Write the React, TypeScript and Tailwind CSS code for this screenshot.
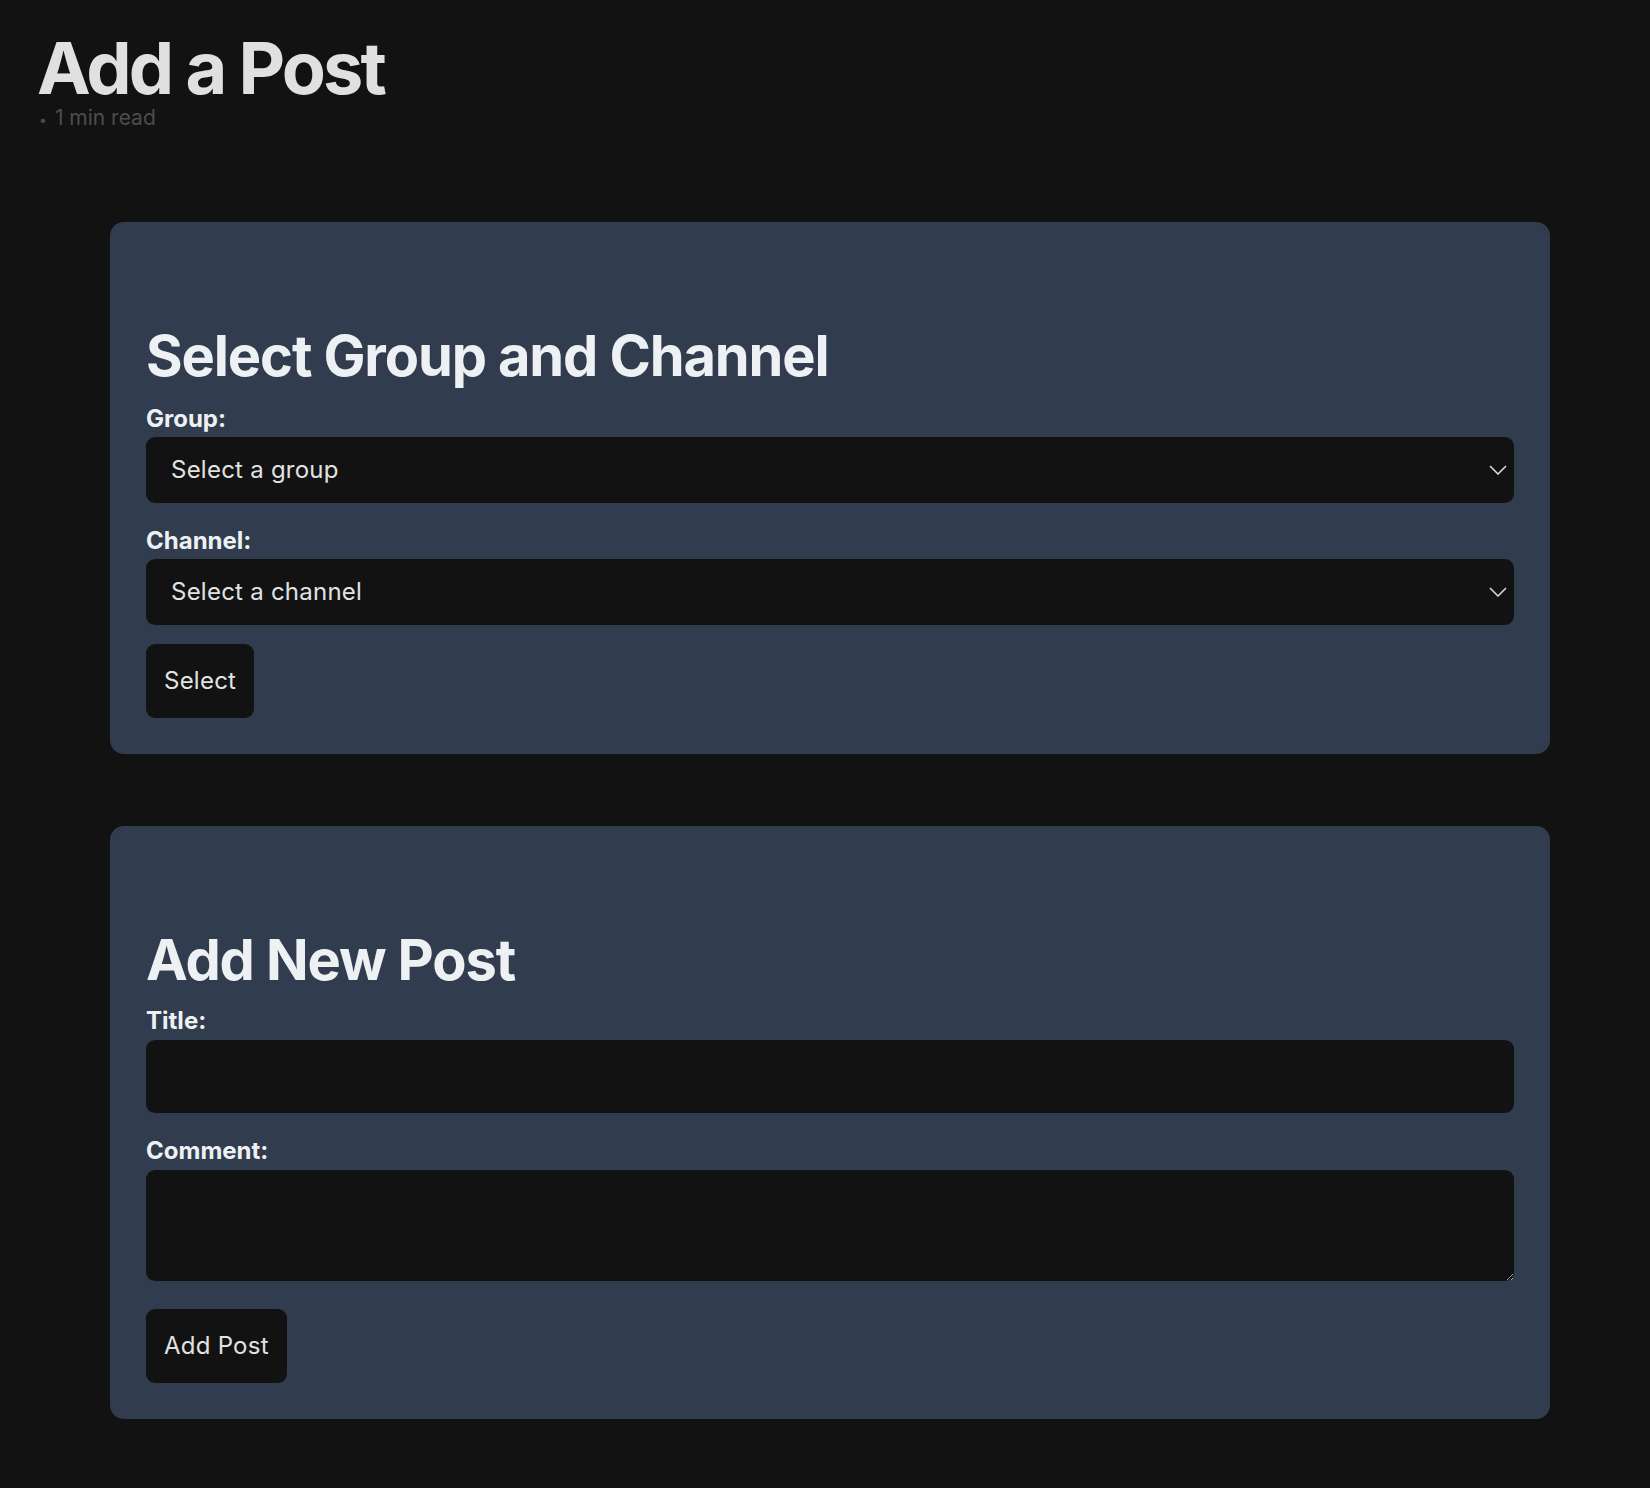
const Label = ({ text, className = "" }: { text: string; className?: string }) => (
	<label className={`block text-[24px] leading-[28px] font-bold text-[#eef1f3] ${className}`}>
		{text}
	</label>
);

const Chevron = () => (
	<svg
		viewBox="0 0 18 10"
		className="absolute right-[7px] top-1/2 -translate-y-1/2 w-[18px] h-[10px] pointer-events-none"
		fill="none"
		stroke="#d8d8d8"
		strokeWidth={1.6}
	>
		<polyline points="1,1 9,9 17,1" />
	</svg>
);

const SelectBox = ({ placeholder }: { placeholder: string }) => (
	<div className="relative mt-[4px]">
		<select
			defaultValue=""
			className="appearance-none block w-full h-[66px] rounded-[9px] bg-[#121212] pl-[25px] pr-10 text-[24px] leading-[36px] tracking-[0.01em] text-[#e2e2e2] outline-none"
		>
			<option value="">{placeholder}</option>
		</select>
		<Chevron />
	</div>
);

const Button = ({ text, className = "" }: { text: string; className?: string }) => (
	<button className={`block rounded-[9px] bg-[#121212] px-[18px] py-[19px] text-[24px] leading-[36px] tracking-[0.01em] text-[#e2e2e2] ${className}`}>
		{text}
	</button>
);

export default function App() {
	return (
		<div
			className="min-h-[1488px] bg-[#121212] pb-[69px]"
			style={{ fontFamily: "Inter, 'Noto Sans', sans-serif" }}
		>
			<div className="pl-[37px] pt-[32px]">
				<h1 className="text-[72px] leading-[72px] font-bold tracking-[-0.04em] text-[#e0e0e0]">
					Add a Post
				</h1>
				<p className="mt-[2px] text-[21px] leading-[24px] text-[#4d4d4d]">
					<span className="text-[14px] mr-[8px] ml-[2px]">•</span>1 min read
				</p>
			</div>

			<div className="ml-[110px] w-[1440px] mt-[90px] flex flex-col gap-[72px]">
				<section className="rounded-[14px] bg-[#313d4f] px-[36px] pt-[36px] pb-[36px]">
					<h2 className="mt-[63px] mb-[14px] text-[56px] leading-[70px] font-bold tracking-[-0.02em] text-[#eef1f3]">
						Select Group and Channel
					</h2>
					<Label text="Group:" />
					<SelectBox placeholder="Select a group" />
					<Label text="Channel:" className="mt-[24px]" />
					<SelectBox placeholder="Select a channel" />
					<Button text="Select" className="mt-[19px]" />
				</section>

				<section className="rounded-[14px] bg-[#313d4f] px-[36px] pt-[36px] pb-[36px]">
					<h2 className="mt-[63px] mb-[12px] text-[56px] leading-[70px] font-bold tracking-[-0.02em] text-[#eef1f3]">
						Add New Post
					</h2>
					<Label text="Title:" />
					<input
						type="text"
						className="block w-full mt-[5px] h-[73px] rounded-[9px] bg-[#121212] px-[25px] text-[24px] text-[#e2e2e2] outline-none"
					/>
					<Label text="Comment:" className="mt-[24px]" />
					<textarea
						className="block w-full mt-[5px] h-[111px] rounded-[9px] bg-[#121212] px-[25px] py-[16px] text-[24px] text-[#e2e2e2] outline-none [color-scheme:dark]"
					/>
					<Button text="Add Post" className="mt-[28px]" />
				</section>
			</div>
		</div>
	);
}
